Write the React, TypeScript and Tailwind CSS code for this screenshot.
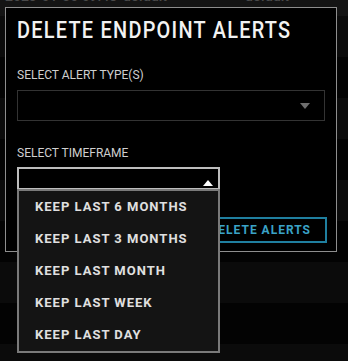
const options = [
  "KEEP LAST 6 MONTHS",
  "KEEP LAST 3 MONTHS",
  "KEEP LAST MONTH",
  "KEEP LAST WEEK",
  "KEEP LAST DAY",
];

function Caret({ up, className }: { up?: boolean; className: string }) {
  return (
    <svg width="10" height="6" viewBox="0 0 10 6" className={className}>
      {up ? <path d="M0 6 L5 0 L10 6 Z" fill="currentColor" /> : <path d="M0 0 L10 0 L5 6 Z" fill="currentColor" />}
    </svg>
  );
}

export default function App() {
  return (
    <div className="relative w-[348px] h-[361px] overflow-hidden bg-[#030303] font-['Roboto',sans-serif]">
      {/* table behind the modal */}
      <div className="flex flex-col -mt-[25px]">
        <div className="h-[41px] bg-[#141414] flex items-end pb-[9px] text-[14px] text-[#4a4a4a] font-medium">
          <span className="w-[123px] pl-[5px]">2023-01-30 09:48</span>
          <span className="w-[122px]">default</span>
          <span>default</span>
        </div>
        {Array.from({ length: 9 }).map((_, i) => (
          <div key={i} className={i % 2 === 0 ? "h-[41px] bg-[#0b0b0b]" : "h-[41px] bg-[#030303]"} />
        ))}
      </div>

      {/* modal */}
      <div className="absolute left-[5px] top-[7px] w-[332px] bg-black border border-[#8e8e8e] px-[11px] pt-[7px] pb-[8px] flex flex-col">
        <h1 className="text-[24px] leading-[30px] font-medium text-[#f2f2f2] tracking-[1.5px] whitespace-nowrap origin-left scale-x-[0.83]">
          DELETE ENDPOINT ALERTS
        </h1>
        <label className="mt-[22px] text-[12px] leading-[16px] text-[#cfcfcf]">SELECT ALERT TYPE(S)</label>
        <div className="mt-[7px] h-[31px] shrink-0 border border-[#333] flex items-center justify-end pr-[14px]">
          <Caret className="text-[#6e6e6e]" />
        </div>
        <label className="mt-[24px] text-[12px] leading-[16px] text-[#cfcfcf]">SELECT TIMEFRAME</label>
        <div className="relative w-[203px]">
          <div className="mt-[6px] h-[23px] border-2 border-[#bdbdbd] flex items-end justify-end pr-[5px] pb-[2px]">
            <Caret up className="text-white" />
          </div>
          <ul className="absolute left-0 top-[28px] w-[203px] bg-[#141414] border-2 border-[#7a7a7a] flex flex-col z-10">
            {options.map((o) => (
              <li key={o} className="h-[32px] flex items-center pl-[16px] text-[13px] font-bold tracking-[1px] text-[#e0e0e0]">
                {o}
              </li>
            ))}
          </ul>
        </div>
        <div className="mt-[27px] flex justify-end -mr-[2px]">
          <button className="h-[26px] px-[14px] border-2 border-[#1f7f9f] text-[#3aa3c7] text-[12px] font-bold tracking-[1px]">
            DELETE ALERTS
          </button>
        </div>
      </div>
    </div>
  );
}
